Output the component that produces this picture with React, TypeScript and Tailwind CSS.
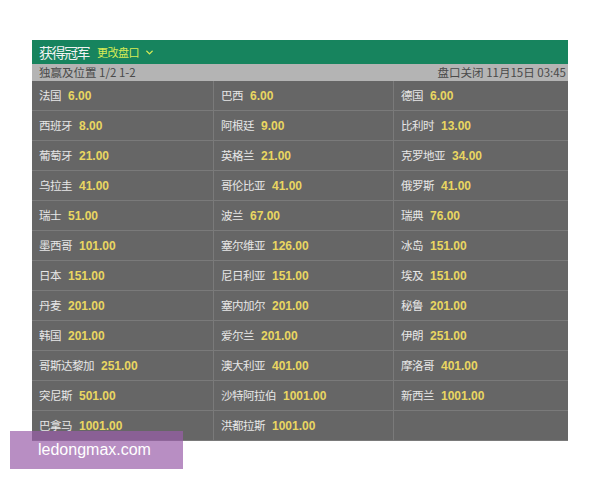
import { ChevronDown } from "lucide-react";

const ODDS: [string, string][] = [
  ["法国", "6.00"], ["巴西", "6.00"], ["德国", "6.00"],
  ["西班牙", "8.00"], ["阿根廷", "9.00"], ["比利时", "13.00"],
  ["葡萄牙", "21.00"], ["英格兰", "21.00"], ["克罗地亚", "34.00"],
  ["乌拉圭", "41.00"], ["哥伦比亚", "41.00"], ["俄罗斯", "41.00"],
  ["瑞士", "51.00"], ["波兰", "67.00"], ["瑞典", "76.00"],
  ["墨西哥", "101.00"], ["塞尔维亚", "126.00"], ["冰岛", "151.00"],
  ["日本", "151.00"], ["尼日利亚", "151.00"], ["埃及", "151.00"],
  ["丹麦", "201.00"], ["塞内加尔", "201.00"], ["秘鲁", "201.00"],
  ["韩国", "201.00"], ["爱尔兰", "201.00"], ["伊朗", "251.00"],
  ["哥斯达黎加", "251.00"], ["澳大利亚", "401.00"], ["摩洛哥", "401.00"],
  ["突尼斯", "501.00"], ["沙特阿拉伯", "1001.00"], ["新西兰", "1001.00"],
  ["巴拿马", "1001.00"], ["洪都拉斯", "1001.00"], ["", ""],
];

const FONT = "font-['Microsoft_YaHei','Noto_Sans_CJK_SC',sans-serif]";

export default function App() {
  return (
    <div className="relative h-[480px] w-[600px] bg-white">
      <div className={`absolute left-[32px] top-[40px] w-[536px] ${FONT}`}>
        {/* 标题栏 */}
        <div className="flex h-[24px] items-center gap-[8px] bg-[#17845e] pl-[7px]">
          <span className="text-[14px] leading-none tracking-[-1.5px] text-[#f2f2f2]">获得冠军</span>
          <span className="flex items-center gap-[5px] text-[11px] leading-none tracking-[-0.5px] text-[#d9ec55]">
            更改盘口
            <ChevronDown className="h-[11px] w-[11px]" strokeWidth={3} />
          </span>
        </div>
        <div className="flex h-[17px] items-center justify-between bg-[#b4b4b4] px-[7px] text-[11.5px] leading-none text-[#4a4a4a]">
          <span>独赢及位置 1/2 1-2</span>
          <span className="-mr-[5px]">盘口关闭 11月15日 03:45</span>
        </div>
        <div className="grid grid-cols-[182px_180px_174px] bg-[#666666]">
          {ODDS.map(([name, price], i) => (
            <div
              key={i}
              className={`flex h-[30px] items-center gap-[7px] border-b border-[#7a7a7a] pl-[7px] ${i % 3 !== 2 ? "border-r" : ""}`}
            >
              <span className="text-[11.5px] tracking-[-0.5px] text-[#e6e6e6]">{name}</span>
              <span className="font-['Liberation_Sans',sans-serif] text-[12px] font-bold text-[#e9d661]">{price}</span>
            </div>
          ))}
        </div>
      </div>
      {/* 水印 */}
      <div className="absolute left-[10px] top-[431px] flex h-[38px] w-[173px] items-center bg-[#9a5ea9]/70 pl-[28px] font-['Liberation_Sans',sans-serif] text-[16px] text-white">
        ledongmax.com
      </div>
    </div>
  );
}
